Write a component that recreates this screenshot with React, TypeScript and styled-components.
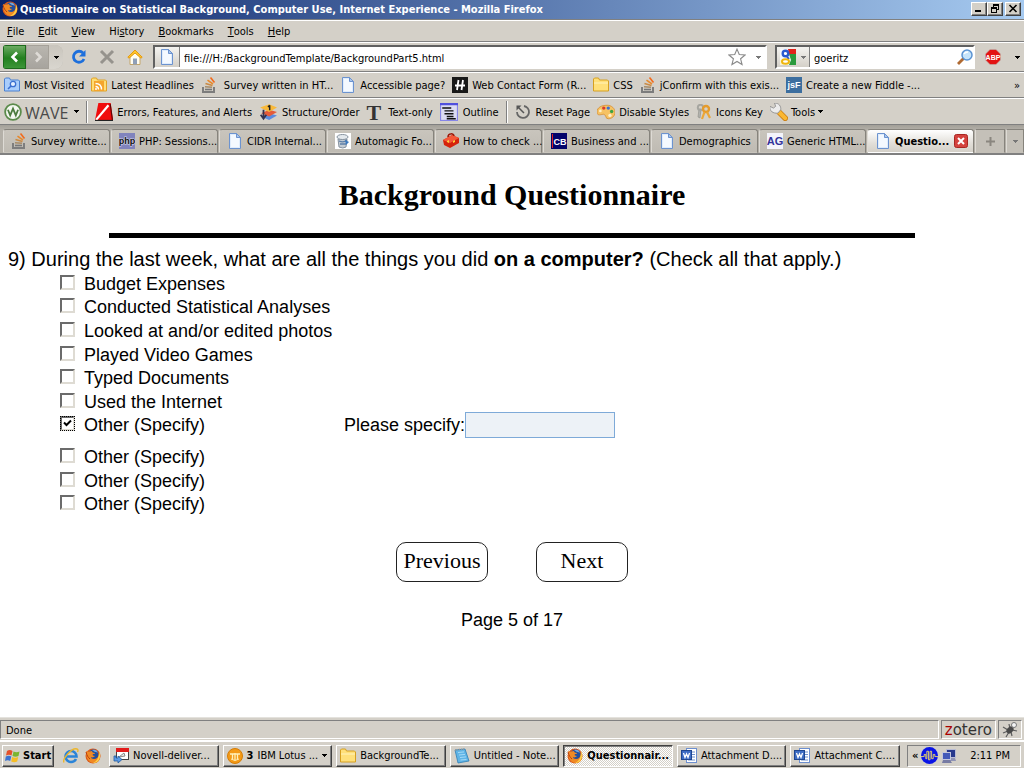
import React, { useState } from "react";
import styled, { createGlobalStyle, css } from "styled-components";

const ui = `"DejaVu Sans Condensed", "Noto Sans", "Open Sans", sans-serif`;
const face = "#d4d0c8";

const GlobalStyle = createGlobalStyle`
  *, *::before, *::after { box-sizing: border-box; }
  body { margin: 0; background: #fff; color: #000; }
  button, input { font: inherit; color: inherit; margin: 0; padding: 0; }
  a { color: inherit; text-decoration: none; }
  svg { display: block; flex: none; }
`;

const raised = css`
  border: 1px solid;
  border-color: #fff #404040 #404040 #fff;
  box-shadow: inset -1px -1px 0 #808080;
`;

const Shell = styled.div`
  display: flex;
  flex-direction: column;
  min-height: 100vh;
  font: 11px/14px ${ui};
  white-space: nowrap;
`;

/* ---------- browser chrome ---------- */

const TitleBar = styled.header`
  display: flex;
  align-items: center;
  height: 20px;
  padding: 0 3px 2px 2px;
  gap: 2px;
  border-bottom: 1px solid #808080;
  background: linear-gradient(90deg, #0a246a, #a6caf0);
  color: #fff;
`;

const WindowTitle = styled.h1`
  flex: 1;
  margin: 0;
  padding-top: 2px;
  overflow: hidden;
  font: bold 11px/14px ${ui};
`;

const WindowButtons = styled.div`
  display: flex;
`;

const WindowButton = styled.button<{ $apart?: boolean }>`
  ${raised}
  display: grid;
  place-items: center;
  width: 16px;
  height: 14px;
  margin-left: ${(p) => (p.$apart ? 2 : 0)}px;
  background: ${face};
`;

const Bar = styled.div<{ $height: number; $gap?: number; $left?: number }>`
  display: flex;
  align-items: center;
  height: ${(p) => p.$height}px;
  gap: ${(p) => p.$gap ?? 0}px;
  padding: 0 4px 0 ${(p) => p.$left ?? 4}px;
  border-top: 1px solid #fff;
  border-bottom: 1px solid #808080;
  background: ${face};
`;

/* Text in the toolbars hangs slightly below the centre line of the icons. */
const hangingText = css`
  padding-top: 2px;
  > svg { margin-bottom: 2px; }
`;

const FlatButton = styled.button<{ $gap?: number }>`
  ${hangingText}
  display: flex;
  align-items: center;
  gap: ${(p) => p.$gap ?? 4}px;
  border: 0;
  background: none;
`;

const Accelerator = styled.span`
  text-decoration: underline;
`;

const Bookmark = styled.a<{ $wide?: boolean }>`
  ${hangingText}
  display: flex;
  align-items: center;
  gap: ${(p) => (p.$wide ? 7 : 4)}px;
`;

const Spacer = styled.span`
  flex: 1;
`;

const Separator = styled.span`
  width: 2px;
  height: 22px;
  border-left: 1px solid #808080;
  border-right: 1px solid #fff;
`;

const BackForward = styled.div`
  display: flex;
  height: 24px;
  border-radius: 3px 8px 8px 3px;
  overflow: hidden;
  background: #bdb9b1;
`;

const HistoryButton = styled.button<{ $kind: "back" | "forward" | "menu" }>`
  display: grid;
  place-items: center;
  width: ${(p) => (p.$kind === "menu" ? 14 : 23)}px;
  border: ${(p) => (p.$kind === "menu" ? 0 : 1)}px solid ${(p) => (p.$kind === "back" ? "#1c6b1c" : "#a5a199")};
  background: ${(p) =>
    p.$kind === "back"
      ? "linear-gradient(#6cab62, #23801f 55%, #3c9638)"
      : p.$kind === "forward"
      ? "linear-gradient(#b9b6af, #a7a49e)"
      : "linear-gradient(#c9c5bd, #d9d6cf)"};
`;

const NavIcons = styled.div`
  display: flex;
  gap: 12px;
  margin: 0 10px 0 8px;
`;

const SearchGroup = styled.div`
  display: flex;
  align-items: center;
  gap: 10px;
  margin-left: 8px;
`;

const Field = styled.div<{ $grow?: boolean }>`
  display: flex;
  align-items: center;
  flex: ${(p) => (p.$grow ? "1" : "0 0 200px")};
  height: 24px;
  border: 2px solid;
  border-color: #606060 #fff #fff #606060;
  background: #fff;
`;

const FieldIcon = styled.span<{ $wide?: boolean }>`
  display: flex;
  align-items: center;
  justify-content: center;
  gap: 5px;
  width: ${(p) => (p.$wide ? 33 : 25)}px;
  height: 100%;
  border-right: 1px solid #808080;
  background: linear-gradient(#f4f3f0, ${face});
`;

const FieldInput = styled.input`
  flex: 1;
  min-width: 0;
  height: 20px;
  padding: 2px 4px 0;
  border: 0;
  outline: 0;
  background: none;
`;

const TrailingIcons = styled.span`
  display: flex;
  align-items: center;
  gap: 10px;
  padding-right: 4px;
`;

const WaveName = styled.span`
  padding-right: 3px;
  color: #4a4a4a;
  font: 16px/18px "Open Sans", sans-serif;
`;

const BigT = styled.span`
  color: #333;
  font: bold 22px/20px "Liberation Serif", serif;
`;

const TabStrip = styled.div`
  display: flex;
  height: 30px;
  gap: 1px;
  padding: 4px 0 0 3px;
  border-bottom: 2px solid #808080;
  background: linear-gradient(#a29f98, #b4b0a8 5px);
`;

const Tab = styled.button<{ $active?: boolean }>`
  ${hangingText}
  display: flex;
  flex: 1 1 0;
  align-items: center;
  gap: 4px;
  min-width: 0;
  padding-left: 7px;
  padding-right: 3px;
  border: 1px solid;
  border-color: #86837c #86837c transparent #dedbd5;
  border-radius: 3px 3px 0 0;
  background: ${(p) => (p.$active ? "linear-gradient(#fff, #e2dfd9 60%, #d4d0c8)" : "linear-gradient(#c9c5bd, #bfbbb3)")};
  font-weight: ${(p) => (p.$active ? "bold" : "normal")};
`;

const TabTool = styled.button<{ $narrow?: boolean }>`
  display: grid;
  place-items: center;
  width: ${(p) => (p.$narrow ? 18 : 30)}px;
  border: 1px solid;
  border-color: #86837c #86837c transparent #dedbd5;
  background: #c4c0b8;
`;

/* ---------- questionnaire ---------- */

const Page = styled.main`
  flex: 1;
  padding: 22px 8px 0;
  font: 18px/20px "Liberation Sans", Arial, sans-serif;
`;

const PageTitle = styled.h2`
  margin: 0;
  text-align: center;
  font: bold 30px/36px "Liberation Serif", serif;
`;

const Rule = styled.hr`
  width: 80%;
  height: 5px;
  margin: 20px auto 9px;
  border: 0;
  background: #000;
`;

const Questions = styled.fieldset`
  margin: 0;
  padding: 0;
  border: 0;
`;

const Question = styled.legend`
  padding: 0;
  font-size: 20px;
  line-height: 25px;
`;

const Choices = styled.div<{ $height: number }>`
  display: flex;
  flex-direction: column;
  height: ${(p) => p.$height}px;
  margin: 0 0 8px 52px;
`;

const ChoiceRow = styled.div`
  display: flex;
  flex: 1 1 0;
  align-items: center;
  min-height: 0;
`;

const Choice = styled.label`
  display: flex;
  align-items: center;
  gap: 9px;
  width: 284px;
`;

const BoxWrap = styled.span`
  display: grid;
  margin-bottom: 3px;
  > * { grid-area: 1 / 1; }
  > svg { display: none; pointer-events: none; }
  > input:checked { outline: 1px dotted #000; outline-offset: -1px; }
  > input:checked + svg { display: block; }
`;

const Box = styled.input`
  appearance: none;
  width: 15px;
  height: 15px;
  border: 2px solid;
  border-color: #6b6b6b #dedbd3 #dedbd3 #6b6b6b;
  background: #fff;
`;

const Specify = styled.label`
  display: flex;
  align-items: center;
`;

const SpecifyInput = styled.input`
  width: 150px;
  height: 26px;
  padding: 0 4px;
  border: 1px solid #7eaad8;
  background: #edf2f7;
`;

const PageButtons = styled.div`
  display: flex;
  justify-content: center;
  gap: 48px;
  margin: 18px 0 28px;
`;

const PageButton = styled.button`
  width: 92px;
  height: 40px;
  padding-bottom: 3px;
  border: 1px solid #222;
  border-radius: 10px;
  background: #fff;
  font: 22px/24px "Liberation Serif", serif;
`;

const PageCount = styled.p`
  margin: 0;
  text-align: center;
`;

/* ---------- status bar and taskbar ---------- */

const StatusBar = styled.footer`
  display: flex;
  gap: 2px;
  height: 23px;
  padding: 2px 2px 1px 0;
  border-top: 1px solid #e4e2dd;
  background: ${face};
`;

const StatusPanel = styled.span<{ $grow?: boolean }>`
  display: flex;
  align-items: center;
  flex: ${(p) => (p.$grow ? 1 : "none")};
  padding: ${(p) => (p.$grow ? "2px 5px 0" : "0 3px")};
  border: 1px solid;
  border-color: #808080 #fff #fff #808080;
`;

const Zotero = styled.span`
  color: #333;
  font: 15px/16px "DejaVu Sans", sans-serif;
  > em { color: #a00; font-style: normal; }
`;

const TaskBar = styled.nav`
  display: flex;
  align-items: center;
  gap: 4px;
  height: 28px;
  padding: 1px 3px 0 2px;
  border-top: 2px solid #fff;
  background: ${face};
`;

const StartButton = styled.button`
  ${raised}
  display: flex;
  align-items: center;
  gap: 2px;
  width: 52px;
  height: 22px;
  padding: 0 2px;
  background: ${face};
  font-weight: bold;
`;

const QuickLaunch = styled.div`
  display: flex;
  gap: 6px;
  padding: 0 4px 0 5px;
`;

const TaskButton = styled.button<{ $active?: boolean }>`
  ${raised}
  display: flex;
  flex: 1 1 0;
  align-items: center;
  gap: 4px;
  min-width: 0;
  height: 22px;
  padding: 0 3px;
  background: ${face};
  ${(p) =>
    p.$active &&
    css`
      border-color: #404040 #fff #fff #404040;
      box-shadow: inset 1px 1px 0 #808080;
      background: repeating-conic-gradient(#fff 0 25%, ${face} 0 50%) 0 0 / 2px 2px;
      font-weight: bold;
    `}
`;

const Tray = styled.div`
  display: flex;
  align-items: center;
  gap: 3px;
  width: 114px;
  height: 22px;
  margin-left: 3px;
  padding: 0 10px 0 4px;
  border: 1px solid;
  border-color: #808080 #fff #fff #808080;
`;

/* ---------- drawings ---------- */

const Art = ({ size = 16, children }: { size?: number; children: React.ReactNode }) => (
  <svg width={size} height={size} viewBox="0 0 16 16" fill="none" aria-hidden="true">
    {children}
  </svg>
);

const Caret = ({ color = "#000" }: { color?: string }) => (
  <svg width="5" height="3" viewBox="0 0 5 3" shapeRendering="crispEdges" aria-hidden="true">
    <path d="M0 0h5v1H4v1H3v1H2V2H1V1H0z" fill={color} />
  </svg>
);

const Firefox = () => (
  <Art>
    <circle cx="8" cy="8" r="7.5" fill="#d9581a" />
    <circle cx="8.5" cy="6.5" r="5" fill="#234f9c" />
    <path d="M7 2c3-1 5 0 6 3-1-1-2-1-3-1z" fill="#6fa9e0" />
    <path d="M1 3c0 8 3 12 8 12 5 0 7-5 6-10-1 4-3 6-6 6-2 0-3-1-3-2 1 1 3 0 4-1-2 0-3-1-2-2 1 0 2 0 2-1C8 5 7 4 7 3 5 3 4 4 3 4z" fill="#f08a24" />
    <path d="M14 3c3 7-1 12-6 12 4-2 6-5 6-12z" fill="#fbd24a" />
    <path d="M1 4c1 4 2 5 4 7" stroke="#b83a10" />
  </Art>
);

const PageIcon = () => (
  <Art>
    <path d="M2.500.500h7l4 4v11h-11z" fill="#dfecfc" stroke="#6c93cf" />
    <path d="M4 2h5v3h3v9H4z" fill="#f4f9ff" />
    <path d="M9.500.500v4h4z" fill="#a9c6ee" stroke="#6c93cf" />
  </Art>
);

const Stack = () => (
  <Art>
    <path d="M2 10v5h11v-5" stroke="#7d7d7d" strokeWidth="2" />
    <path d="M4 12.500h7" stroke="#777" strokeWidth="1.600" />
    <path d="M4 9.700l7 .6" stroke="#a78b68" strokeWidth="1.600" />
    <path d="M4.500 6.500l7 2" stroke="#c98a45" strokeWidth="1.600" />
    <path d="M6.500 3.200l5.500 3.800" stroke="#e8892b" strokeWidth="1.600" />
    <path d="M9.500.500l4 5" stroke="#f26a1b" strokeWidth="1.600" />
  </Art>
);

const FolderShape = ({ fill, edge }: { fill: string; edge: string }) => (
  <path d="M.5 14v-12l1-1h4l1 2h8l1 1v10z" fill={fill} stroke={edge} />
);

const Folder = () => (
  <Art>
    <FolderShape fill="#ffe07a" edge="#d6a021" />
    <path d="M1 6h14" stroke="#fff3bd" />
  </Art>
);

const MostVisited = () => (
  <Art>
    <FolderShape fill="#a9cdfb" edge="#4a80d0" />
    <circle cx="9" cy="7" r="2.700" fill="#e5f0ff" stroke="#3a6fd0" strokeWidth="1.300" />
    <path d="M7 9l-3 3" stroke="#3a6fd0" strokeWidth="1.600" />
  </Art>
);

const Feed = () => (
  <Art>
    <FolderShape fill="#ffdd75" edge="#e0a326" />
    <rect x="3" y="4" width="10" height="10" fill="#f5a52c" />
    <path d="M4.500 6.500c4 0 6 2 6 6M4.500 9.500c2 0 3 1 3 3" stroke="#fff" strokeWidth="1.400" />
    <circle cx="5" cy="12" r="1" fill="#fff" />
  </Art>
);

const Tile = ({ bg, children }: { bg: string; children: React.ReactNode }) => (
  <Art>
    <rect width="16" height="16" fill={bg} />
    {children}
  </Art>
);

const TileText = styled.text<{ $size: number }>`
  font: bold ${(p) => p.$size}px "Liberation Sans", sans-serif;
  text-anchor: middle;
`;

const HIcon = () => (
  <Tile bg="#181818">
    <path d="M6.500 3L5 13M11 3L9.500 13M3 8.500h10" stroke="#fff" strokeWidth="1.800" />
  </Tile>
);

const JsFiddle = () => (
  <Tile bg="#3c6e9f">
    <TileText $size={9} x="8" y="11" fill="#fff">jsF</TileText>
  </Tile>
);

const Php = () => (
  <Tile bg="#8083bd">
    <TileText $size={9} x="8" y="11" fill="#111" stroke="#dcdcf0" strokeWidth="1" paintOrder="stroke">php</TileText>
  </Tile>
);

const CodeBook = () => (
  <Tile bg="#04046c">
    <path d="M1.500 1v14" stroke="#d22" />
    <TileText $size={9} x="9" y="12" fill="#fff">CB</TileText>
  </Tile>
);

const AgIcon = () => (
  <Tile bg="#f4f4fb">
    <TileText $size={11} x="8" y="12" fill="#33339a">AG</TileText>
  </Tile>
);

const Automagic = () => (
  <Tile bg="#fff">
    <path d="M3 6l1 8q4 2 7 0l1-8z" fill="#c4ccd3" stroke="#8793a0" />
    <ellipse cx="7.500" cy="4" rx="5.500" ry="2.500" fill="#e4e9ed" stroke="#8793a0" />
    <path d="M4 8q5 2 8-1M5 11h6" stroke="#5d7fa8" strokeWidth="1.300" />
    <path d="M10 7l4 2-3 3" fill="#3a78bd" />
  </Tile>
);

const RedBox = () => (
  <Art>
    <path d="M0 7l9-5 7 3v5l-9 5-6-3z" fill="#d5230c" />
    <path d="M0 7l9-5 7 3-9 5z" fill="#f4593a" />
    <path d="M5 4c0-4 6-4 6-1" stroke="#9d1708" strokeWidth="1.500" />
    <path d="M4 8l2-1v3l-2-1zM10 8l2-1v2l-2 1z" fill="#ffd23c" />
  </Art>
);

const WaveLogo = () => (
  <Art size={18}>
    <circle cx="8" cy="8" r="7" fill="#f4f8f1" stroke="#5b8b4b" strokeWidth="1.600" />
    <path d="M3.500 6l2 5L8 5l2.500 6 2-5" stroke="#4c7c3e" strokeWidth="1.600" />
  </Art>
);

const ErrorsIcon = () => (
  <Art size={18}>
    <path d="M3 0h11l2 15H0z" fill="#f00c0c" />
    <path d="M1 15L12 2" stroke="#fff" strokeWidth="2" />
    <path d="M0 15.500h16" stroke="#222" />
    <path d="M13.500 1l2 14" stroke="#5c0505" />
  </Art>
);

const Structure = () => (
  <Art size={18}>
    <path d="M2 12l7-3 7 2-7 4z" fill="#5a8be0" />
    <path d="M2 9l7-3 7 2-7 4z" fill="#e55b3a" />
    <path d="M1 4l8-3 7 3-7 4z" fill="#f9b93a" />
    <path d="M4 6v8M1.500 10.500L4 14l2.500-3.500" stroke="#33334f" strokeWidth="1.600" />
    <path d="M9.500 2v4.500M8 3.500L9.500 2" stroke="#222" strokeWidth="1.300" />
  </Art>
);

const Outline = () => (
  <Art size={18}>
    <rect x=".5" y=".5" width="15" height="15" fill="#dcdcf2" stroke="#8585e8" />
    <path d="M0 1h16" stroke="#5050dd" strokeWidth="2" />
    <path d="M2 4.500h8M4 7h8M4 9.500h8M6 12h6M6 14h8" stroke="#111" strokeWidth="1.300" />
  </Art>
);

const Reset = () => (
  <Art>
    <path d="M9 2a6 6 0 1 1-7 6" stroke="#666" strokeWidth="1.800" />
    <path d="M1.500 1.500h5l-5 5z" fill="#555" />
    <path d="M3 3l6 6" stroke="#555" strokeWidth="1.500" />
  </Art>
);

const Palette = () => (
  <Art size={18}>
    <path d="M0 8c0-4 4-6 9-6 4 0 7 3 7 6 0 4-3 6-6 6-3 0-1-3-4-4-2 0-6 2-6-2z" fill="#f6c263" stroke="#d7923a" strokeWidth=".8" />
    <circle cx="6" cy="4.500" r="1.500" fill="#d93a2c" />
    <circle cx="10" cy="4.500" r="1.500" fill="#3a70d2" />
    <circle cx="13" cy="7.500" r="1.500" fill="#3da344" />
    <circle cx="11.500" cy="11" r="1.500" fill="#fff1c9" />
    <circle cx="3" cy="7" r="1.200" fill="#fff1c9" />
  </Art>
);

const Keys = () => (
  <Art>
    <path d="M5 5l-1 9-2-1 1-8z" fill="#b4b4b0" stroke="#8b8b85" strokeWidth=".6" />
    <circle cx="4.500" cy="3.500" r="2.700" stroke="#a6a6a0" strokeWidth="2" />
    <circle cx="10" cy="5" r="3" stroke="#e59b2c" strokeWidth="2.400" />
    <path d="M11 8l3 6M8.500 8L6 15" stroke="#eba637" strokeWidth="2.200" />
  </Art>
);

const Wrench = () => (
  <Art size={18}>
    <path d="M8 8l5.500 5.500" stroke="#c97d12" strokeWidth="5" strokeLinecap="round" />
    <path d="M8 8l5.500 5.500" stroke="#fbb731" strokeWidth="3.600" strokeLinecap="round" />
    <path d="M0 3l3 1.500L5 3 4 0c4 0 6 3 5.500 6L7 9C3 9.500-1 7 0 3z" fill="#ececec" stroke="#8e8e8e" strokeWidth=".8" />
  </Art>
);

const Reload = () => (
  <Art>
    <path d="M13 10a5.500 5.500 0 1 1-1-6" stroke="#1d6fdc" strokeWidth="2.800" />
    <path d="M14.500 1v6.500H8z" fill="#1d6fdc" />
  </Art>
);

const Stop = () => (
  <Art>
    <path d="M2 2l12 12M14 2L2 14" stroke="#96938d" strokeWidth="3" />
  </Art>
);

const Home = () => (
  <Art>
    <path d="M3 8v7.500h10V8L8 3z" fill="#fffdf2" stroke="#c4a66a" />
    <path d="M8 1L.8 8.200l1.200 1L8 4l6 5.200 1.200-1z" fill="#ffc62b" stroke="#e59a12" />
    <path d="M6 9.500h4v6H6z" fill="#8f9fb8" />
  </Art>
);

const Star = () => (
  <Art size={18}>
    <path d="M8 1l2 4.800 5.200.4-4 3.400 1.300 5.100L8 12l-4.500 2.700 1.300-5.100-4-3.400L6 5.800z" fill="#fff" stroke="#8a8a8a" />
  </Art>
);

const Google = () => (
  <Art>
    <rect width="16" height="16" fill="#f6f8fd" />
    <path d="M8 0h8v5H9z" fill="#e2231a" />
    <path d="M9 5h7v11H9l2-5z" fill="#2a9a3c" />
    <path d="M0 11h8v5H0z" fill="#fbf3d0" />
    <circle cx="5.500" cy="4.500" r="2.800" fill="#fff" stroke="#2a5bd0" strokeWidth="2.400" />
    <path d="M7 8l2 2" stroke="#2a5bd0" strokeWidth="2" />
    <ellipse cx="5.500" cy="12.500" rx="3.500" ry="2.200" fill="#fff" stroke="#efb60e" strokeWidth="2" />
  </Art>
);

const Magnifier = () => (
  <Art>
    <path d="M7 9l-6 6" stroke="#b06a32" strokeWidth="2.800" />
    <circle cx="10" cy="6" r="5" fill="#c6e4fb" stroke="#5b93d2" strokeWidth="1.500" />
    <path d="M7 5c1-2 3-2 4-2" stroke="#fff" strokeWidth="1.500" />
  </Art>
);

const Abp = () => (
  <Art>
    <path d="M5 .5h6L15.500 5v6L11 15.500H5L.5 11V5z" fill="#e31313" stroke="#b9b5ad" strokeWidth=".6" />
    <TileText $size={7} x="8" y="10.500" fill="#fff">ABP</TileText>
  </Art>
);

const CloseTab = () => (
  <Art>
    <rect x="1.500" y="1.500" width="13" height="13" rx="2" fill="#d4423e" stroke="#a92622" />
    <path d="M5 5l6 6M11 5l-6 6" stroke="#fff" strokeWidth="2" />
  </Art>
);

const WinFlag = () => (
  <Art>
    <path d="M2 3c2-1.500 4-1 5.500 0L6.500 7.500C5 6.500 3 6.500 1 7.500z" fill="#e4512b" />
    <path d="M8.500 3.500c2 1 4 1 6 0L13.500 8c-2 1-4 1-6 0z" fill="#7ab52f" />
    <path d="M.8 8.500c2-1 4-1 5.500 0L5.200 13c-1.500-1-3.500-1-5.200 0z" fill="#3b73d1" />
    <path d="M7.200 9c2 1 4 1 6 0l-1 4.500c-2 1-4 1-6 0z" fill="#f6bd24" />
  </Art>
);

const Explorer = () => (
  <Art>
    <path d="M13 11c-1 2-3 3-5 3a5.500 5.500 0 1 1 5.500-5.500H4" stroke="#2b84d8" strokeWidth="2.600" />
    <path d="M1 14.500C-1 11 9-1 14 1c1.500.6 1 2 .5 3" stroke="#edb72c" strokeWidth="1.400" />
  </Art>
);

const Novell = () => (
  <Art>
    <rect x="3.500" y=".5" width="12" height="11" fill="#fff" stroke="#444" />
    <path d="M3 0h13v4H3z" fill="#e31b1b" />
    <path d="M6 9l5-4 1 3z" fill="#eee" stroke="#888" />
    <path d="M1 8v5h4v2l4-3.500L5 8v2H3V8z" fill="#5b9be6" stroke="#225a9e" strokeWidth=".8" />
  </Art>
);

const Lotus = () => (
  <Art>
    <circle cx="8" cy="8" r="7.500" fill="#f49a16" stroke="#d57c05" />
    <path d="M3 6h10M5.500 6v5M8 5v7M10.500 6v5" stroke="#fff0b8" strokeWidth="1.300" />
    <path d="M4 11q4 3 8 0" stroke="#fff0b8" />
  </Art>
);

const Notepad = () => (
  <Art>
    <path d="M1 2l10-1 4 12-11 2z" fill="#5fb4e6" stroke="#2d7db5" strokeWidth=".8" />
    <path d="M4 4.500l6-.6M5 7l6-.6M6 9.500l6-.6M6.500 12l6-.5" stroke="#a5daf7" />
    <path d="M1 2l10-1" stroke="#999" strokeWidth="1.500" strokeDasharray="1 1" />
  </Art>
);

const Word = () => (
  <Art>
    <rect x="5.500" y=".5" width="10" height="14" fill="#fff" stroke="#6d8fcf" />
    <path d="M11 4h3M11 6.500h3M11 9h3M7 12h7" stroke="#6d8fcf" />
    <rect x=".5" y="2.500" width="10" height="9" fill="#3d6cc4" stroke="#1f468f" />
    <path d="M2.500 5l1.500 4.500L5.500 6 7 9.500 8.500 5" stroke="#fff" strokeWidth="1.300" />
  </Art>
);

const Bug = () => (
  <Art>
    <path d="M1 5l5 3M1 11l5-2M4 15l3-5M10 14l-1-4M7 2l1 5M15 9l-5-1" stroke="#5c5c5c" strokeWidth="1.200" />
    <ellipse cx="8" cy="8" rx="3" ry="4" fill="#4a4a4a" transform="rotate(45 8 8)" />
    <circle cx="12" cy="3" r="2.500" fill="#f4f4f4" stroke="#777" />
  </Art>
);

const Pulse = () => (
  <Art size={17}>
    <circle cx="8" cy="8" r="8" fill="#0a14e6" />
    <path d="M0 9h3V7h1.500v4h1V4h1.500v8h1.500V4h1.500v7h1.500V7H13v2h3" stroke="#ffe75a" strokeWidth=".8" />
  </Art>
);

const Network = () => (
  <Art>
    <rect x="5.500" y="1.500" width="9" height="8" fill="#27388c" stroke="#b9bcd4" />
    <path d="M8 10h6l1 3H8z" fill="#8f93b5" />
    <rect x="1.500" y="4.500" width="8" height="7" fill="#4359b8" stroke="#c3c6dc" />
    <path d="M2 12h7l2 3H1z" fill="#777ba3" />
  </Art>
);

/* ---------- data ---------- */

const menus = [["", "F", "ile"], ["", "E", "dit"], ["", "V", "iew"], ["Hi", "s", "tory"], ["", "B", "ookmarks"], ["", "T", "ools"], ["", "H", "elp"]];

const bookmarks = [
  { icon: <MostVisited />, text: "Most Visited" },
  { icon: <Feed />, text: "Latest Headlines" },
  { icon: <Stack />, text: "Survey written in HT...", wide: true },
  { icon: <PageIcon />, text: "Accessible page?" },
  { icon: <HIcon />, text: "Web Contact Form (R..." },
  { icon: <Folder />, text: "CSS" },
  { icon: <Stack />, text: "jConfirm with this exis..." },
  { icon: <JsFiddle />, text: "Create a new Fiddle -..." },
];

const tabs = [
  { icon: <Stack />, text: "Survey writte..." },
  { icon: <Php />, text: "PHP: Sessions..." },
  { icon: <PageIcon />, text: "CIDR Internal..." },
  { icon: <Automagic />, text: "Automagic Fo..." },
  { icon: <RedBox />, text: "How to check ..." },
  { icon: <CodeBook />, text: "Business and ..." },
  { icon: <PageIcon />, text: "Demographics" },
  { icon: <AgIcon />, text: "Generic HTML..." },
];

const firstChoices = [
  "Budget Expenses",
  "Conducted Statistical Analyses",
  "Looked at and/or edited photos",
  "Played Video Games",
  "Typed Documents",
  "Used the Internet",
];

const tasks = [
  { icon: <Novell />, text: "Novell-deliver..." },
  { icon: <Lotus />, text: "IBM Lotus ...", count: 3 },
  { icon: <Folder />, text: "BackgroundTe..." },
  { icon: <Notepad />, text: "Untitled - Note..." },
  { icon: <Firefox />, text: "Questionnair...", active: true },
  { icon: <Word />, text: "Attachment D...." },
  { icon: <Word />, text: "Attachment C...." },
];

const CheckChoice = ({ text, checked = false }: { text: string; checked?: boolean }) => {
  const [on, setOn] = useState(checked);
  return (
    <Choice>
      <BoxWrap>
        <Box type="checkbox" checked={on} onChange={() => setOn(!on)} />
        <svg width="15" height="15" viewBox="0 0 15 15" aria-hidden="true">
          <path d="M4 6.500l2.500 2.500L11 4.500" fill="none" stroke="#000" strokeWidth="2" />
        </svg>
      </BoxWrap>
      {text}
    </Choice>
  );
};

export default function App() {
  const [url, setUrl] = useState("file:///H:/BackgroundTemplate/BackgroundPart5.html");
  const [query, setQuery] = useState("goeritz");

  return (
    <Shell>
      <GlobalStyle />
      <TitleBar>
        <Firefox />
        <WindowTitle>Questionnaire on Statistical Background, Computer Use, Internet Experience - Mozilla Firefox</WindowTitle>
        <WindowButtons>
          <WindowButton aria-label="Minimize">
            <svg width="10" height="9"><path d="M1 6h6v2H1z" /></svg>
          </WindowButton>
          <WindowButton aria-label="Restore">
            <svg width="10" height="9" fill="none" stroke="#000" shapeRendering="crispEdges">
              <path d="M3 .5h6M3 1.500h6M3.500 0v3M8.500 1v5M6 5.500h3M1 3.500h6M1 4.500h6M1.500 3v6M6.500 4v5M1 8.500h6" />
            </svg>
          </WindowButton>
          <WindowButton aria-label="Close" $apart>
            <svg width="10" height="9"><path d="M1.500 1l7 7M8.500 1l-7 7" stroke="#000" strokeWidth="1.600" /></svg>
          </WindowButton>
        </WindowButtons>
      </TitleBar>

      <Bar $height={22} $gap={14} $left={7}>
        {menus.map(([before, key, after]) => (
          <FlatButton key={key + after} $gap={0}>
            {before}
            <Accelerator>{key}</Accelerator>
            {after}
          </FlatButton>
        ))}
      </Bar>

      <Bar $height={30} $left={3}>
        <BackForward>
          <HistoryButton $kind="back" aria-label="Back">
            <Art><path d="M10 3.500L5.500 8l4.500 4.500" stroke="#fff" strokeWidth="2.600" /></Art>
          </HistoryButton>
          <HistoryButton $kind="forward" aria-label="Forward">
            <Art><path d="M6 3.500L10.500 8 6 12.500" stroke="#dedbd6" strokeWidth="2.600" /></Art>
          </HistoryButton>
          <HistoryButton $kind="menu" aria-label="Recent pages"><Caret /></HistoryButton>
        </BackForward>
        <NavIcons>
          <FlatButton aria-label="Reload"><Reload /></FlatButton>
          <FlatButton aria-label="Stop"><Stop /></FlatButton>
          <FlatButton aria-label="Home"><Home /></FlatButton>
        </NavIcons>
        <Field $grow>
          <FieldIcon><PageIcon /></FieldIcon>
          <FieldInput aria-label="Address" value={url} onChange={(e) => setUrl(e.target.value)} />
          <TrailingIcons><Star /><Caret color="#777" /></TrailingIcons>
        </Field>
        <SearchGroup>
          <Field>
            <FieldIcon $wide><Google /><Caret color="#777" /></FieldIcon>
            <FieldInput aria-label="Search" value={query} onChange={(e) => setQuery(e.target.value)} />
            <Magnifier />
          </Field>
          <FlatButton $gap={14} aria-label="Adblock Plus"><Abp /><Caret /></FlatButton>
        </SearchGroup>
      </Bar>

      <Bar $height={26} $gap={7}>
        {bookmarks.map((b) => (
          <Bookmark key={b.text} href="#" $wide={b.wide}>{b.icon}{b.text}</Bookmark>
        ))}
        <Spacer />
        <FlatButton aria-label="More bookmarks">»</FlatButton>
      </Bar>

      <Bar $height={27} $gap={7}>
        <FlatButton $gap={3}><WaveLogo /><WaveName>WAVE</WaveName><Caret /></FlatButton>
        <Separator />
        <FlatButton><ErrorsIcon />Errors, Features, and Alerts</FlatButton>
        <FlatButton $gap={5}><Structure />Structure/Order</FlatButton>
        <FlatButton $gap={7}><BigT>T</BigT>Text-only</FlatButton>
        <FlatButton $gap={5}><Outline />Outline</FlatButton>
        <Separator />
        <FlatButton $gap={5}><Reset />Reset Page</FlatButton>
        <FlatButton><Palette />Disable Styles</FlatButton>
        <FlatButton><Keys />Icons Key</FlatButton>
        <FlatButton $gap={3}><Wrench />Tools<Caret /></FlatButton>
      </Bar>

      <TabStrip>
        {tabs.map((t) => (
          <Tab key={t.text}>{t.icon}{t.text}</Tab>
        ))}
        <Tab $active><PageIcon />Questio...<CloseTab /></Tab>
        <TabTool aria-label="New tab">
          <svg width="9" height="9"><path d="M4.500 0v9M0 4.500h9" stroke="#8a867f" strokeWidth="2" /></svg>
        </TabTool>
        <TabTool $narrow aria-label="List all tabs"><Caret color="#777" /></TabTool>
      </TabStrip>

      <Page>
        <PageTitle>Background Questionnaire</PageTitle>
        <Rule />
        <Questions>
          <Question>
            9) During the last week, what are all the things you did <b>on a computer?</b> (Check all that apply.)
          </Question>
          <Choices $height={165}>
            {firstChoices.map((c) => (
              <ChoiceRow key={c}><CheckChoice text={c} /></ChoiceRow>
            ))}
            <ChoiceRow>
              <CheckChoice text="Other (Specify)" checked />
              <Specify>Please specify:<SpecifyInput type="text" /></Specify>
            </ChoiceRow>
          </Choices>
          <Choices $height={71}>
            {[1, 2, 3].map((n) => (
              <ChoiceRow key={n}><CheckChoice text="Other (Specify)" /></ChoiceRow>
            ))}
          </Choices>
        </Questions>
        <PageButtons>
          <PageButton>Previous</PageButton>
          <PageButton>Next</PageButton>
        </PageButtons>
        <PageCount>Page 5 of 17</PageCount>
      </Page>

      <StatusBar>
        <StatusPanel $grow>Done</StatusPanel>
        <StatusPanel><Zotero><em>z</em>otero</Zotero></StatusPanel>
        <StatusPanel><Bug /></StatusPanel>
      </StatusBar>

      <TaskBar>
        <StartButton><WinFlag />Start</StartButton>
        <QuickLaunch><Explorer /><Firefox /></QuickLaunch>
        {tasks.map((t) => (
          <TaskButton key={t.text} $active={t.active}>
            {t.icon}
            {t.count && <b>{t.count}</b>}
            {t.text}
            {t.count && <Caret />}
          </TaskButton>
        ))}
        <Tray><b>«</b><Pulse /><Network /><Spacer />2:11 PM</Tray>
      </TaskBar>
    </Shell>
  );
}
